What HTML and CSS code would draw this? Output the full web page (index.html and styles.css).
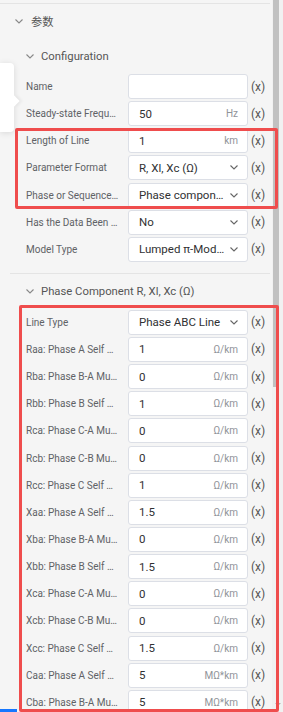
FILE: index.html
```html
<!DOCTYPE html>
<html lang="en">
<head>
    <meta charset="UTF-8">
    <title>Line Parameters</title>
    <link rel="stylesheet" href="styles.css">
</head>
<body>
    <div class="panel">
        <div class="content">
            <div class="rule rule-top"></div>
            <div class="group-title">
                <svg class="chevron" viewBox="0 0 8 5"><polyline points="0.5,0.5 4,4 7.5,0.5"/></svg>
                <span>参数</span>
            </div>

            <div class="sub-title">
                <svg class="chevron" viewBox="0 0 8 5"><polyline points="0.5,0.5 4,4 7.5,0.5"/></svg>
                <span>Configuration</span>
            </div>
            <div class="rows">
                <div class="row">
                    <label class="label">Name</label>
                    <div class="field"><span class="value"></span></div>
                    <span class="clear">(x)</span>
                </div>
                <div class="row">
                    <label class="label">Steady-state Frequency</label>
                    <div class="field"><span class="value">50</span><span class="unit">Hz</span></div>
                    <span class="clear">(x)</span>
                </div>
                <div class="mark mark-config">
                    <div class="row">
                        <label class="label">Length of Line</label>
                        <div class="field"><span class="value">1</span><span class="unit">km</span></div>
                        <span class="clear">(x)</span>
                    </div>
                    <div class="row">
                        <label class="label">Parameter Format</label>
                        <div class="field select"><span class="value">R, Xl, Xc (Ω)</span><svg class="caret" viewBox="0 0 8 5"><polyline points="0.5,0.5 4,4 7.5,0.5"/></svg></div>
                        <span class="clear">(x)</span>
                    </div>
                    <div class="row">
                        <label class="label">Phase or Sequence Component</label>
                        <div class="field select"><span class="value">Phase component</span><svg class="caret" viewBox="0 0 8 5"><polyline points="0.5,0.5 4,4 7.5,0.5"/></svg></div>
                        <span class="clear">(x)</span>
                    </div>
                </div>
                <div class="row">
                    <label class="label">Has the Data Been Converted</label>
                    <div class="field select"><span class="value">No</span><svg class="caret" viewBox="0 0 8 5"><polyline points="0.5,0.5 4,4 7.5,0.5"/></svg></div>
                    <span class="clear">(x)</span>
                </div>
                <div class="row">
                    <label class="label">Model Type</label>
                    <div class="field select"><span class="value">Lumped π-Model</span><svg class="caret" viewBox="0 0 8 5"><polyline points="0.5,0.5 4,4 7.5,0.5"/></svg></div>
                    <span class="clear">(x)</span>
                </div>
            </div>

            <div class="rule rule-section"></div>
            <div class="sub-title">
                <svg class="chevron" viewBox="0 0 8 5"><polyline points="0.5,0.5 4,4 7.5,0.5"/></svg>
                <span>Phase Component R, Xl, Xc (Ω)</span>
            </div>
            <div class="rows mark mark-phase">
                <div class="row">
                    <label class="label">Line Type</label>
                    <div class="field select"><span class="value">Phase ABC Line</span><svg class="caret" viewBox="0 0 8 5"><polyline points="0.5,0.5 4,4 7.5,0.5"/></svg></div>
                    <span class="clear">(x)</span>
                </div>
                <div class="row">
                    <label class="label">Raa: Phase A Self Resistance</label>
                    <div class="field"><span class="value">1</span><span class="unit">Ω/km</span></div>
                    <span class="clear">(x)</span>
                </div>
                <div class="row">
                    <label class="label">Rba: Phase B-A Mutual Resistance</label>
                    <div class="field"><span class="value">0</span><span class="unit">Ω/km</span></div>
                    <span class="clear">(x)</span>
                </div>
                <div class="row">
                    <label class="label">Rbb: Phase B Self Resistance</label>
                    <div class="field"><span class="value">1</span><span class="unit">Ω/km</span></div>
                    <span class="clear">(x)</span>
                </div>
                <div class="row">
                    <label class="label">Rca: Phase C-A Mutual Resistance</label>
                    <div class="field"><span class="value">0</span><span class="unit">Ω/km</span></div>
                    <span class="clear">(x)</span>
                </div>
                <div class="row">
                    <label class="label">Rcb: Phase C-B Mutual Resistance</label>
                    <div class="field"><span class="value">0</span><span class="unit">Ω/km</span></div>
                    <span class="clear">(x)</span>
                </div>
                <div class="row">
                    <label class="label">Rcc: Phase C Self Resistance</label>
                    <div class="field"><span class="value">1</span><span class="unit">Ω/km</span></div>
                    <span class="clear">(x)</span>
                </div>
                <div class="row">
                    <label class="label">Xaa: Phase A Self Reactance</label>
                    <div class="field"><span class="value">1.5</span><span class="unit">Ω/km</span></div>
                    <span class="clear">(x)</span>
                </div>
                <div class="row">
                    <label class="label">Xba: Phase B-A Mutual Reactance</label>
                    <div class="field"><span class="value">0</span><span class="unit">Ω/km</span></div>
                    <span class="clear">(x)</span>
                </div>
                <div class="row">
                    <label class="label">Xbb: Phase B Self Reactance</label>
                    <div class="field"><span class="value">1.5</span><span class="unit">Ω/km</span></div>
                    <span class="clear">(x)</span>
                </div>
                <div class="row">
                    <label class="label">Xca: Phase C-A Mutual Reactance</label>
                    <div class="field"><span class="value">0</span><span class="unit">Ω/km</span></div>
                    <span class="clear">(x)</span>
                </div>
                <div class="row">
                    <label class="label">Xcb: Phase C-B Mutual Reactance</label>
                    <div class="field"><span class="value">0</span><span class="unit">Ω/km</span></div>
                    <span class="clear">(x)</span>
                </div>
                <div class="row">
                    <label class="label">Xcc: Phase C Self Reactance</label>
                    <div class="field"><span class="value">1.5</span><span class="unit">Ω/km</span></div>
                    <span class="clear">(x)</span>
                </div>
                <div class="row">
                    <label class="label">Caa: Phase A Self Capacitive Reactance</label>
                    <div class="field"><span class="value">5</span><span class="unit">MΩ*km</span></div>
                    <span class="clear">(x)</span>
                </div>
                <div class="row">
                    <label class="label">Cba: Phase B-A Mutual Capacitive Reactance</label>
                    <div class="field"><span class="value">5</span><span class="unit">MΩ*km</span></div>
                    <span class="clear">(x)</span>
                </div>
            </div>
        </div>
        <div class="scrollbar">
            <div class="thumb"></div>
            <div class="scroll-down"></div>
        </div>
    </div>

    <!-- popover clipped at the left edge of the panel -->
    <div class="popover"></div>
    <div class="tab-active"></div>
</body>
</html>
```

FILE: styles.css
```css
body {
    margin: 0;
    width: 283px;
    height: 712px;
    overflow: hidden;
    position: relative;
    background-color: #f5f5f5;
    font-family: Roboto, "Noto Sans CJK SC", sans-serif;
    color: #303133;
}
.panel {
    display: flex;
    height: 712px;
}
.content {
    width: 272px;
}
.scrollbar {
    width: 11px;
    background-color: #f1f1f1;
    display: flex;
    flex-direction: column;
}
.thumb {
    width: 6px;
    height: 387px;
    margin-left: 1px;
    background-color: #c1c1c1;
}
.scroll-down {
    width: 0;
    margin-top: auto;
    margin-bottom: 6px;
    margin-left: 3px;
    border-left: 3px solid transparent;
    border-right: 3px solid transparent;
    border-top: 3px solid #b0b0b0;
}
.rule {
    height: 1px;
    margin-right: 2px;
    background-color: #e4e4e4;
}
.rule-top {
    margin-top: 3px;
}
.rule-section {
    margin-top: 11px;
    margin-left: 10px;
}
.chevron, .caret {
    width: 8px;
    height: 5px;
    flex: none;
    fill: none;
    stroke: #888;
    stroke-width: 1.1;
}
.caret {
    stroke: #666;
}
.group-title, .sub-title {
    display: flex;
    align-items: center;
    font-size: 11.3px;
    color: #555;
}
.group-title {
    height: 34px;
    padding-left: 15px;
    gap: 8px;
}
.sub-title {
    height: 36px;
    padding-left: 26px;
    gap: 7px;
}
.rows, .mark {
    display: flex;
    flex-direction: column;
    gap: 2.15px;
}
.row {
    display: grid;
    grid-template-columns: 99px 120px auto;
    column-gap: 3px;
    align-items: center;
    height: 25px;
    padding-left: 26px;
}
.label {
    padding-right: 6px;
    font-size: 10px;
    color: #606266;
    white-space: nowrap;
    overflow: hidden;
    text-overflow: ellipsis;
}
.field {
    height: 25px;
    box-sizing: border-box;
    display: flex;
    align-items: center;
    min-width: 0;
    padding: 0 9px 0 10px;
    background-color: #fff;
    border: 1px solid #dcdfe6;
    border-radius: 3px;
}
.value {
    flex: 1;
    min-width: 0;
    font-size: 11.5px;
    white-space: nowrap;
    overflow: hidden;
    text-overflow: ellipsis;
}
.select .value {
    margin-right: 5px;
}
.unit {
    font-size: 10px;
    color: #909399;
}
.clear {
    font-size: 12px;
    color: #555;
}
/* red highlight frames drawn over the grouped rows */
.mark {
    position: relative;
}
.mark::after {
    content: '';
    position: absolute;
    border: 3px solid #ef4d4d;
    border-radius: 2px;
    pointer-events: none;
}
.mark-config::after {
    top: -0.5px;
    bottom: -1.5px;
    left: 15px;
    right: -6px;
}
.mark-phase::after {
    top: -5px;
    height: 401px;
    left: 18.5px;
    right: -7px;
}
.popover {
    position: absolute;
    left: 0;
    top: 63px;
    width: 14px;
    height: 69px;
    background-color: #fff;
    border-radius: 0 4px 4px 0;
    box-shadow: 0 1px 6px rgba(0, 0, 0, 0.12);
}
.popover:after {
    content: '';
    position: absolute;
    left: 10px;
    top: 34px;
    width: 8px;
    height: 8px;
    background-color: #fff;
    transform: rotate(45deg);
    box-shadow: 2px -2px 3px rgba(0, 0, 0, 0.05);
}
.tab-active {
    position: absolute;
    left: 0;
    bottom: 0;
    width: 17px;
    height: 3px;
    background-color: #1677ff;
}
```
